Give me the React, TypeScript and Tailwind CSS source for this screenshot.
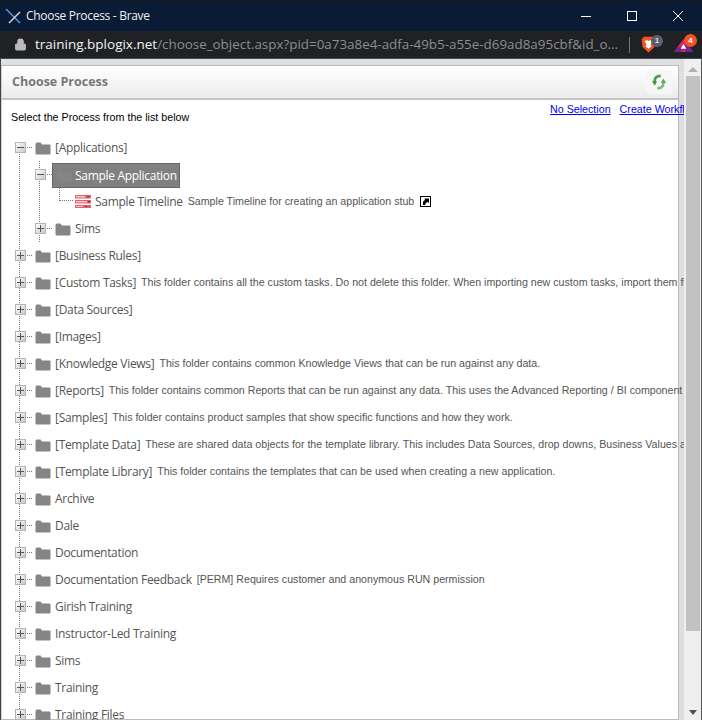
import React from "react";
import { Lock } from "lucide-react";

const segoe = "font-['Open_Sans',sans-serif] text-[12px] tracking-[-0.3px]";
const arial = "font-['Liberation_Sans',Arial,sans-serif]";

type Row = { name: string; desc?: string; level?: number; open?: boolean; selected?: boolean; timeline?: boolean };

const rows: Row[] = [
  { name: "[Applications]", open: true },
  { name: "Sample Application", level: 1, open: true, selected: true },
  { name: "Sample Timeline", level: 2, timeline: true, desc: "Sample Timeline for creating an application stub" },
  { name: "Sims", level: 1 },
  { name: "[Business Rules]" },
  { name: "[Custom Tasks]", desc: "This folder contains all the custom tasks. Do not delete this folder. When importing new custom tasks, import them first into this folder" },
  { name: "[Data Sources]" },
  { name: "[Images]" },
  { name: "[Knowledge Views]", desc: "This folder contains common Knowledge Views that can be run against any data." },
  { name: "[Reports]", desc: "This folder contains common Reports that can be run against any data. This uses the Advanced Reporting / BI component" },
  { name: "[Samples]", desc: "This folder contains product samples that show specific functions and how they work." },
  { name: "[Template Data]", desc: "These are shared data objects for the template library. This includes Data Sources, drop downs, Business Values and more" },
  { name: "[Template Library]", desc: "This folder contains the templates that can be used when creating a new application." },
  { name: "Archive" },
  { name: "Dale" },
  { name: "Documentation" },
  { name: "Documentation Feedback", desc: "[PERM] Requires customer and anonymous RUN permission" },
  { name: "Girish Training" },
  { name: "Instructor-Led Training" },
  { name: "Sims" },
  { name: "Training" },
  { name: "Training Files" },
];

const Folder = ({ dim }: { dim?: boolean }) => (
  <svg width="16" height="14" viewBox="0 0 16 14" className="shrink-0">
    <path
      d="M0.5 3.5 Q0.5 1.5 2 1.5 L5.5 1.5 L7 3.5 L14.5 3.5 Q15.5 3.5 15.5 4.5 L15.5 12.5 Q15.5 13.5 14.5 13.5 L1.5 13.5 Q0.5 13.5 0.5 12.5 Z"
      fill={dim ? "#8a8a8a" : "#858585"}
    />
  </svg>
);

const Expander = ({ open }: { open?: boolean }) => (
  <span className="relative flex h-[11px] w-[11px] shrink-0 items-center justify-center border border-[#b4b4b4] bg-gradient-to-br from-white to-[#c8c8c8]">
    <span className="h-px w-[7px] bg-[#555]" />
    {!open && <span className="absolute h-[7px] w-px bg-[#555]" />}
  </span>
);

const TimelineIcon = () => (
  <svg width="16" height="13" viewBox="0 0 16 13" className="shrink-0">
    <rect x="0" y="0" width="16" height="3.5" fill="#e2616c" />
    <rect x="0" y="5" width="16" height="3.5" fill="#e2616c" />
    <rect x="0" y="10" width="16" height="3" fill="#e2616c" />
    <rect x="1" y="1" width="9" height="1.5" fill="#f3c3c3" />
    <rect x="1" y="6" width="11" height="1.5" fill="#f3c3c3" />
    <rect x="1" y="11" width="7" height="1" fill="#f3c3c3" />
    <rect x="12" y="1" width="2" height="1.5" fill="#a83030" />
    <rect x="13" y="6" width="2" height="1.5" fill="#a83030" />
    <rect x="10" y="11" width="2" height="1" fill="#a83030" />
  </svg>
);

const ShortcutIcon = () => (
  <svg width="11" height="11" viewBox="0 0 11 11" className="ml-[6px] shrink-0">
    <rect x="0.5" y="0.5" width="10" height="10" fill="#fff" stroke="#000" />
    <path d="M3 9 L3 6.5 Q3 4.5 5 4 L4.5 2.5 L9 2.5 L9 7 L7.5 6 Q5.5 6.5 5 9 Z" fill="#000" />
  </svg>
);

const TreeRow = ({ row }: { row: Row }) => {
  const level = row.level ?? 0;
  const pad = level === 0 ? "pl-[13px]" : level === 1 ? "pl-[33px]" : "pl-[73px]";
  return (
    <div className={`relative flex h-[27px] items-center whitespace-nowrap ${pad}`}>
      {level < 2 && (
        <>
          <Expander open={row.open} />
          <span className="mx-[1px] w-[5px] shrink-0 border-t border-dotted border-[#777]" />
          <span className="w-[2px] shrink-0" />
        </>
      )}
      {level === 2 && (
        <span className="absolute left-[57px] top-[-10px] h-[23px] w-[14px] border-b border-l border-dotted border-[#777]" />
      )}
      {row.selected ? (
        <span className={`absolute left-[50px] top-[2px] flex h-[25px] w-[128px] items-center border border-[#666] bg-[#808080] pl-[3px] text-white ${segoe}`}>
          <span className="opacity-50">
            <Folder dim />
          </span>
          <span className="ml-[3px]">{row.name}</span>
        </span>
      ) : (
        <>
          {row.timeline ? <TimelineIcon /> : <Folder />}
          <span className={`ml-[4px] text-[#555] ${segoe}`}>{row.name}</span>
        </>
      )}
      {row.desc && <span className={`ml-[5px] text-[10.65px] text-[#555] ${arial}`}>{row.desc}</span>}
      {row.timeline && <ShortcutIcon />}
    </div>
  );
};

const BraveIcon = () => (
  <span className="relative h-[17px] w-[33px]">
    <svg width="15" height="17" viewBox="0 0 17 20" className="absolute left-0 top-0">
      <path d="M3 1 L14 1 L16.5 4 L15.5 13 L8.5 19.5 L1.5 13 L0.5 4 Z" fill="#f1561f" />
      <path d="M4 6 L7 5 L8.5 6 L10 5 L13 6 L11 10 L12 12 L8.5 15 L5 12 L6 10 Z" fill="#fff" />
    </svg>
    <span className={`absolute left-[10px] top-[-1px] flex h-[12px] w-[12px] items-center justify-center rounded-full bg-[#5a5f6b] text-[8px] font-bold text-[#ddd] ${arial}`}>1</span>
  </span>
);

const RewardsIcon = () => (
  <span className="relative h-[17px] w-[28px]">
    <svg width="19" height="13" viewBox="0 0 20 16" preserveAspectRatio="none" className="absolute left-0 top-[3px]">
      <path d="M10 0 L20 16 L0 16 Z" fill="#e0245e" />
      <path d="M10 0 L20 16 L13 16 Z" fill="#7a2a96" />
      <path d="M0 16 L7 16 L10 12 L13 16 L20 16 L16 10 L4 10 Z" fill="#6b2a8e" />
      <path d="M10 6 L13 12 L7 12 Z" fill="#fff" />
    </svg>
    <span className={`absolute left-[10px] top-[-2px] flex h-[13px] w-[13px] items-center justify-center rounded-full bg-[#f4502a] text-[8px] font-bold text-white ${arial}`}>4</span>
  </span>
);

const RefreshIcon = () => (
  <span className="flex h-[24px] w-[26px] items-center justify-center rounded-[3px] bg-[#f6f6f6]">
    <svg width="14" height="18" viewBox="0 0 16 18" fill="none">
      <path d="M10 2 Q3 2 3 8 L3 9" stroke="#4f9e4f" strokeWidth="3" />
      <path d="M0 8 L6 8 L3 13 Z" fill="#3f8f3f" />
      <path d="M6 16 Q13 16 13 10 L13 9" stroke="#7ac07a" strokeWidth="3" />
      <path d="M10 10 L16 10 L13 5 Z" fill="#5aa85a" />
    </svg>
  </span>
);

const App = () => {
  return (
    <div className="flex h-[720px] w-[702px] flex-col overflow-hidden bg-[#0a1c35]">
      <div className="flex h-[31px] shrink-0 items-center border-t border-[#1a1a1a] pl-[5px]">
        <svg width="17" height="17" viewBox="0 0 17 17" className="shrink-0">
          <path d="M1 1 L15 15" stroke="#5d8fd0" strokeWidth="1.6" />
          <path d="M15 4 L4 15" stroke="#c8ccd2" strokeWidth="1.6" />
        </svg>
        <span className={`ml-[4px] text-[#f0f0f0] ${segoe}`}>Choose Process - Brave</span>
        <div className="ml-auto flex items-center pr-px">
          <span className="flex w-[46px] justify-center">
            <svg width="10" height="10" viewBox="0 0 10 10">
              <path d="M0 5.5 H10" stroke="#fff" />
            </svg>
          </span>
          <span className="flex w-[46px] justify-center">
            <svg width="10" height="10" viewBox="0 0 10 10" fill="none">
              <rect x="0.5" y="0.5" width="9" height="9" stroke="#fff" />
            </svg>
          </span>
          <span className="flex w-[46px] justify-center">
            <svg width="10" height="10" viewBox="0 0 10 10">
              <path d="M0 0 L10 10 M10 0 L0 10" stroke="#fff" />
            </svg>
          </span>
        </div>
      </div>
      <div className="flex h-[28px] shrink-0 items-center whitespace-nowrap border-b border-[#3a4a60] bg-[#202124] pl-[14px]">
        <Lock size={13} className="shrink-0 text-[#bbb]" fill="#bbb" />
        <span className="ml-[8px] w-[594px] overflow-hidden font-['Open_Sans',sans-serif] text-[13.5px]">
          <span className="text-[#f2f2f2]">training.bplogix.net</span>
          <span className="text-[13.4px] text-[#8a8d91]">/choose_object.aspx?pid=0a73a8e4-adfa-49b5-a55e-d69ad8a95cbf&amp;id_o...</span>
        </span>
        <span className="h-[16px] w-px shrink-0 bg-[#777]" />
        <div className="ml-[11px] flex shrink-0">
          <BraveIcon />
          <RewardsIcon />
        </div>
      </div>
      <div className="flex min-h-0 flex-1 border-l border-r border-l-[#444] border-r-[#555] bg-[#dedede]">
        <div className="w-[683px] shrink-0 overflow-hidden pt-[6px]">
          <div className="h-full w-[678px] border border-[#bbb] border-l-[#ccc] bg-white">
            <div className="flex h-[34px] items-center justify-between border-b-2 border-[#c4c4c4] bg-gradient-to-b from-white to-[#ececec] pl-[10px] pr-[6px]">
              <span className="font-['Open_Sans',sans-serif] text-[12.5px] font-bold text-[#777]">Choose Process</span>
              <RefreshIcon />
            </div>
            <div className={`flex h-[34px] w-[700px] items-start justify-between whitespace-nowrap pl-[9px] text-[10.7px] ${arial}`}>
              <span className="mt-[9px] text-black">Select the Process from the list below</span>
              <span className="mt-[1px] flex w-[152px] shrink-0 gap-[9px] text-[#0000ee] underline">
                <span>No Selection</span>
                <span>Create Workflow</span>
              </span>
            </div>
            <div className="relative w-[700px]">
              <span className="absolute left-[17px] top-[13px] h-[600px] border-l border-dotted border-[#777]" />
              <span className="absolute left-[37px] top-[27px] h-[81px] border-l border-dotted border-[#777]" />
              {rows.map((row, i) => (
                <TreeRow key={i} row={row} />
              ))}
            </div>
          </div>
        </div>
        <div className="flex w-[17px] shrink-0 flex-col items-center bg-[#efefef]">
          <span className="mt-[8px] h-0 w-0 border-x-[5px] border-b-[5px] border-x-transparent border-b-[#b0b0b0]" />
          <span className="mt-[4px] h-[555px] w-[14px] bg-[#c2c2c2]" />
          <span className="mt-auto mb-[5px] h-0 w-0 border-x-[4px] border-t-[5px] border-x-transparent border-t-[#505050]" />
        </div>
      </div>
    </div>
  );
};

export default App;
